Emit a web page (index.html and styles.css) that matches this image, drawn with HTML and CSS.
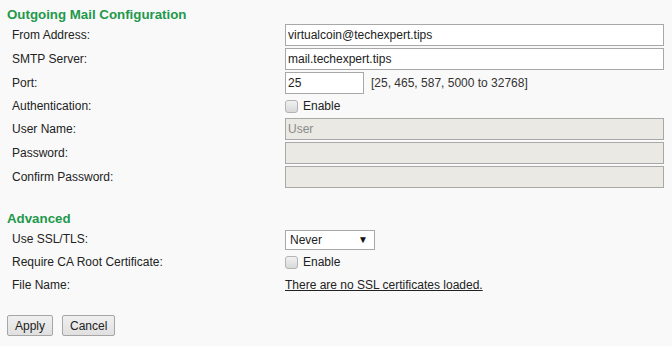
FILE: index.html
```html
<!DOCTYPE html>
<html lang="en">

<head>
    <meta charset="UTF-8">
    <title>Outgoing Mail Configuration</title>
    <link rel="stylesheet" href="styles.css">
</head>

<body>
    <div class="page">
        <h2 class="section-title">Outgoing Mail Configuration</h2>
        <div class="form-row">
            <label for="from">From Address:</label>
            <input type="text" id="from" class="wide" value="virtualcoin@techexpert.tips">
        </div>
        <div class="form-row">
            <label for="smtp">SMTP Server:</label>
            <input type="text" id="smtp" class="wide" value="mail.techexpert.tips">
        </div>
        <div class="form-row">
            <label for="port">Port:</label>
            <input type="text" id="port" class="short" value="25">
            <span class="hint">[25, 465, 587, 5000 to 32768]</span>
        </div>
        <div class="form-row check-row">
            <label for="auth">Authentication:</label>
            <input type="checkbox" id="auth" class="check">
            <span class="check-text">Enable</span>
        </div>
        <div class="form-row">
            <label for="user">User Name:</label>
            <input type="text" id="user" class="wide" placeholder="User" disabled>
        </div>
        <div class="form-row">
            <label for="pass">Password:</label>
            <input type="password" id="pass" class="wide" disabled>
        </div>
        <div class="form-row">
            <label for="pass2">Confirm Password:</label>
            <input type="password" id="pass2" class="wide" disabled>
        </div>

        <h2 class="section-title advanced">Advanced</h2>
        <div class="form-row">
            <label for="ssl">Use SSL/TLS:</label>
            <div class="select-box">
                <select id="ssl">
                    <option>Never</option>
                    <option>Always</option>
                </select>
                <span class="arrow">&#9660;</span>
            </div>
        </div>
        <div class="form-row check-row">
            <label for="ca">Require CA Root Certificate:</label>
            <input type="checkbox" id="ca" class="check">
            <span class="check-text">Enable</span>
        </div>
        <div class="form-row text-row">
            <label>File Name:</label>
            <a href="#" class="cert-link">There are no SSL certificates loaded.</a>
        </div>

        <div class="buttons">
            <button type="button" class="btn">Apply</button>
            <button type="button" class="btn">Cancel</button>
        </div>
    </div>
</body>

</html>
```

FILE: styles.css
```css
* {
    margin: 0;
    padding: 0;
    box-sizing: border-box;
    font-family: "Liberation Sans", Arial, sans-serif;
}

body {
    background: #f9f9f9;
    color: #222;
    font-size: 12px;
}

.page {
    padding: 5px 7px 0 7px;
}

.section-title {
    font-size: 13.3px;
    font-weight: bold;
    color: #22984b;
    line-height: 17px;
    height: 19px;
    padding-top: 1px;
}

.advanced {
    margin-top: 21px;
}

.form-row {
    display: flex;
    align-items: center;
    height: 22px;
    margin-bottom: 2px;
    padding-left: 5px;
}

.form-row label {
    width: 273px;
    flex-shrink: 0;
}

.check-row {
    height: 20px;
    margin-top: 1px;
}

.text-row {
    height: 22px;
}

.form-row input[type=text],
.form-row input[type=password] {
    height: 22px;
    border: 1px solid #a8a8a8;
    background: #fff;
    padding: 0 2px;
    font-size: 12px;
    color: #222;
}

.wide {
    width: 379px;
}

.short {
    width: 79px;
}

.form-row input:disabled {
    background: #ebe9e4;
}

.form-row input::placeholder {
    color: #8a8a8a;
}

.hint {
    margin-left: 7px;
    color: #333;
}

.check {
    appearance: none;
    width: 13px;
    height: 13px;
    border: 1px solid #b3b3b3;
    border-radius: 3px;
    background: linear-gradient(#f2f2f2, #d8d8d8);
    margin-right: 5px;
}

.check-text {
    color: #222;
}

.select-box {
    position: relative;
    width: 90px;
    height: 20px;
    margin-top: 1px;
}

.select-box select {
    appearance: none;
    width: 100%;
    height: 100%;
    border: 1px solid #a8a8a8;
    background: #fff;
    font-size: 12px;
    padding-left: 4px;
    color: #222;
}

.arrow {
    position: absolute;
    right: 7px;
    top: 4px;
    font-size: 10px;
    color: #111;
    pointer-events: none;
}

.cert-link {
    color: #222;
    text-decoration: underline;
}

.buttons {
    display: flex;
    gap: 9px;
    margin-top: 19px;
}

.btn {
    height: 21px;
    padding: 0 7px;
    border: 1px solid #a6a6a6;
    border-radius: 2px;
    background: linear-gradient(#f0f0f0, #e0e0e0);
    font-size: 12px;
    color: #222;
}
```
